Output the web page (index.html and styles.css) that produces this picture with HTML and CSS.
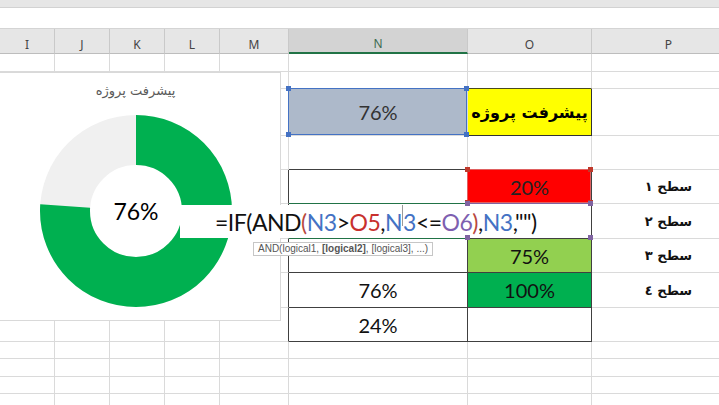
FILE: index.html
```html
<!DOCTYPE html>
<html>
<head>
<meta charset="utf-8">
<link rel="stylesheet" href="styles.css">
</head>
<body>
<div class="app">
  <div class="ribbon"></div>
  <div class="fbar"></div>
  <div class="sheet">
    <div class="c h">I</div><div class="c h">J</div><div class="c h">K</div><div class="c h">L</div><div class="c h">M</div><div class="c h act">N</div><div class="c h">O</div><div class="c h">P</div>

    <div class="c"></div><div class="c"></div><div class="c"></div><div class="c"></div><div class="c"></div><div class="c"></div><div class="c"></div><div class="c"></div>

    <div class="c"></div><div class="c"></div><div class="c"></div><div class="c"></div><div class="c"></div><div class="c"></div><div class="c ob"></div><div class="c"></div>

    <div class="c"></div><div class="c"></div><div class="c"></div><div class="c"></div><div class="c"></div>
    <div class="c sel">76%<span class="rng blue"><i class="hd tl"></i><i class="hd tr"></i><i class="hd bl"></i><i class="hd br"></i></span></div>
    <div class="c yel">پیشرفت پروژه</div>
    <div class="c"></div>

    <div class="c"></div><div class="c"></div><div class="c"></div><div class="c"></div><div class="c"></div><div class="c tb"></div><div class="c tb"></div><div class="c"></div>

    <div class="c"></div><div class="c"></div><div class="c"></div><div class="c"></div><div class="c tr"></div>
    <div class="c t gb"></div>
    <div class="c t red">20%<span class="rng redr"><i class="hd tl"></i><i class="hd tr"></i><i class="hd bl"></i><i class="hd br"></i></span></div>
    <div class="c lvl">سطح ١</div>

    <div class="c"></div><div class="c"></div><div class="c"></div><div class="c"></div><div class="c tr"></div>
    <div class="c t gb"></div>
    <div class="c t"><span class="rng purp"><i class="hd tl"></i><i class="hd tr"></i><i class="hd bl"></i><i class="hd br"></i></span></div>
    <div class="c lvl">سطح ٢</div>

    <div class="c"></div><div class="c"></div><div class="c"></div><div class="c"></div><div class="c tr"></div>
    <div class="c t"></div>
    <div class="c t lg">75%</div>
    <div class="c lvl">سطح ٣</div>

    <div class="c"></div><div class="c"></div><div class="c"></div><div class="c"></div><div class="c tr"></div>
    <div class="c t">76%</div>
    <div class="c t dg">100%</div>
    <div class="c lvl">سطح ٤</div>

    <div class="c"></div><div class="c"></div><div class="c"></div><div class="c"></div><div class="c tr"></div>
    <div class="c t">24%</div>
    <div class="c t"></div>
    <div class="c"></div>

    <div class="c"></div><div class="c"></div><div class="c"></div><div class="c"></div><div class="c"></div><div class="c"></div><div class="c"></div><div class="c"></div>
    <div class="c"></div><div class="c"></div><div class="c"></div><div class="c"></div><div class="c"></div><div class="c"></div><div class="c"></div><div class="c"></div>
    <div class="c"></div><div class="c"></div><div class="c"></div><div class="c"></div><div class="c"></div><div class="c"></div><div class="c"></div><div class="c"></div>
    <div class="c"></div><div class="c"></div><div class="c"></div><div class="c"></div><div class="c"></div><div class="c"></div><div class="c"></div><div class="c"></div>
  </div>

  <div class="chart">
    <div class="ctitle">پیشرفت پروژه</div>
    <div class="donut">
      <svg viewBox="0 0 192 192" width="192" height="192">
        <circle cx="96" cy="96" r="71" fill="none" stroke="#f0f0f0" stroke-width="50"/>
        <circle cx="96" cy="96" r="71" fill="none" stroke="#00b050" stroke-width="50" stroke-dasharray="339.05 446.1" transform="rotate(-90 96 96)"/>
      </svg>
      <div class="dlabel">76%</div>
    </div>
  </div>

  <div class="editor"><span>=IF(AND</span><span class="pr">(</span><span class="fb">N3</span>&gt;<span class="fr">O5</span>,<span class="fb">N</span><span class="cur"></span><span class="fb">3</span>&lt;=<span class="fp">O6</span><span class="pr">)</span>,<span class="fb">N3</span>,"")</div>
  <div class="tip">AND(logical1, <b>[logical2]</b>, [logical3], ...)</div>
</div>
</body>
</html>
```
FILE: styles.css
```css
* { box-sizing: border-box; }
html, body { margin: 0; padding: 0; }
body {
  width: 719px;
  height: 405px;
  overflow: hidden;
  background: #fff;
  font-family: "Lato", "DejaVu Sans", sans-serif;
}
.app {
  position: relative;
  width: 719px;
  height: 405px;
  overflow: hidden;
}
.ribbon {
  height: 8px;
  background: #e6e6e6;
  border-bottom: 1px solid #d2d2d2;
}
.fbar {
  height: 21px;
  background: #fff;
  border-bottom: 1px solid #d4d4d4;
}
.sheet {
  display: grid;
  width: 746px;
  grid-template-columns: 55px 55px 55px 55px 69px 179px 124px 154px;
  grid-template-rows: 25px 18px 17px 47px 34px 34px 35px 34px 35px 34px 17px 18px 17px 17px;
}
.c {
  position: relative;
  border-right: 1px solid #dadada;
  border-bottom: 1px solid #dadada;
  display: flex;
  align-items: center;
  justify-content: center;
  font-size: 20px;
  color: #111;
}
.h {
  background: #e6e6e6;
  border-right: 1px solid #c9c9c9;
  border-bottom: 1px solid #bdbdbd;
  font-family: "Noto Sans", sans-serif;
  font-size: 12px;
  color: #444;
  padding-top: 6px;
}
.h.act {
  background: #d3d3d3;
  border-bottom: 2px solid #217346;
  color: #3d6b52;
}
.ob { border-bottom-color: #4a4a1e; }
.sel { background: #adb9ca; color: #333; }
.yel {
  background: #ffff00;
  border-right-color: #333;
  border-bottom-color: #333;
  font-family: "DejaVu Sans", sans-serif;
  font-weight: bold;
  font-size: 16px;
  white-space: nowrap;
  direction: rtl;
  color: #000;
}
.tb { border-bottom-color: #404040; }
.tr { border-right-color: #404040; }
.t { border-right-color: #404040; border-bottom-color: #404040; }
.gb { border-bottom-color: #217346; }
.red { background: #ff0000; color: #222; }
.lg { background: #92d050; }
.dg { background: #00b050; }
.lvl {
  font-family: "DejaVu Sans", sans-serif;
  font-size: 13px;
  font-weight: bold;
  direction: rtl;
  color: #111;
  white-space: nowrap;
}
.rng {
  position: absolute;
  top: -1px;
  left: -1px;
  right: 0;
  bottom: 0;
  border: 1px solid;
}
.rng.blue { border-color: #4472c4; color: #4472c4; }
.rng.redr { border-color: #e06060; color: #c0392b; }
.rng.purp { border-color: #8064a2; color: #8064a2; }
.hd {
  position: absolute;
  width: 5px;
  height: 5px;
  background: currentColor;
  z-index: 4;
}
.hd.tl { top: -3px; left: -3px; }
.hd.tr { top: -3px; right: -3px; }
.hd.bl { bottom: -3px; left: -3px; }
.hd.br { bottom: -3px; right: -3px; }

.chart {
  position: absolute;
  left: 0;
  top: 72px;
  width: 281px;
  height: 249px;
  background: #fff;
  border-top: 1px solid #d9d9d9;
  border-right: 1px solid #d9d9d9;
  border-bottom: 1px solid #d9d9d9;
  display: flex;
  flex-direction: column;
  padding-top: 9px;
  z-index: 2;
}
.ctitle {
  font-family: "DejaVu Sans", sans-serif;
  font-size: 13px;
  line-height: 18px;
  color: #595959;
  text-align: center;
  padding-right: 9px;
  direction: rtl;
}
.donut {
  display: grid;
  width: 192px;
  height: 192px;
  margin-top: 15px;
  margin-left: 40px;
}
.donut svg, .dlabel { grid-area: 1 / 1; }
.dlabel {
  place-self: center;
  font-size: 23px;
  color: #000;
}
.editor {
  position: absolute;
  left: 180px;
  top: 205px;
  width: 411px;
  height: 33px;
  background: #fff;
  z-index: 3;
  padding-left: 35px;
  font-size: 23px;
  line-height: 35px;
  white-space: nowrap;
  color: #111;
  letter-spacing: -0.5px;
}
.pr { color: #b8483e; }
.fb { color: #4472c4; }
.fr { color: #c8312e; }
.fp { color: #7e5fb0; }
.cur {
  display: inline-block;
  width: 0;
  height: 21px;
  border-left: 1px solid #9a9a9a;
  vertical-align: top;
}
.tip {
  position: absolute;
  left: 253px;
  top: 242px;
  height: 14px;
  padding: 0 4px;
  border: 1px solid #c6c6c6;
  background: #fff;
  font-family: "Liberation Sans", sans-serif;
  font-size: 10px;
  line-height: 12px;
  color: #555;
  white-space: nowrap;
  z-index: 3;
}
```
